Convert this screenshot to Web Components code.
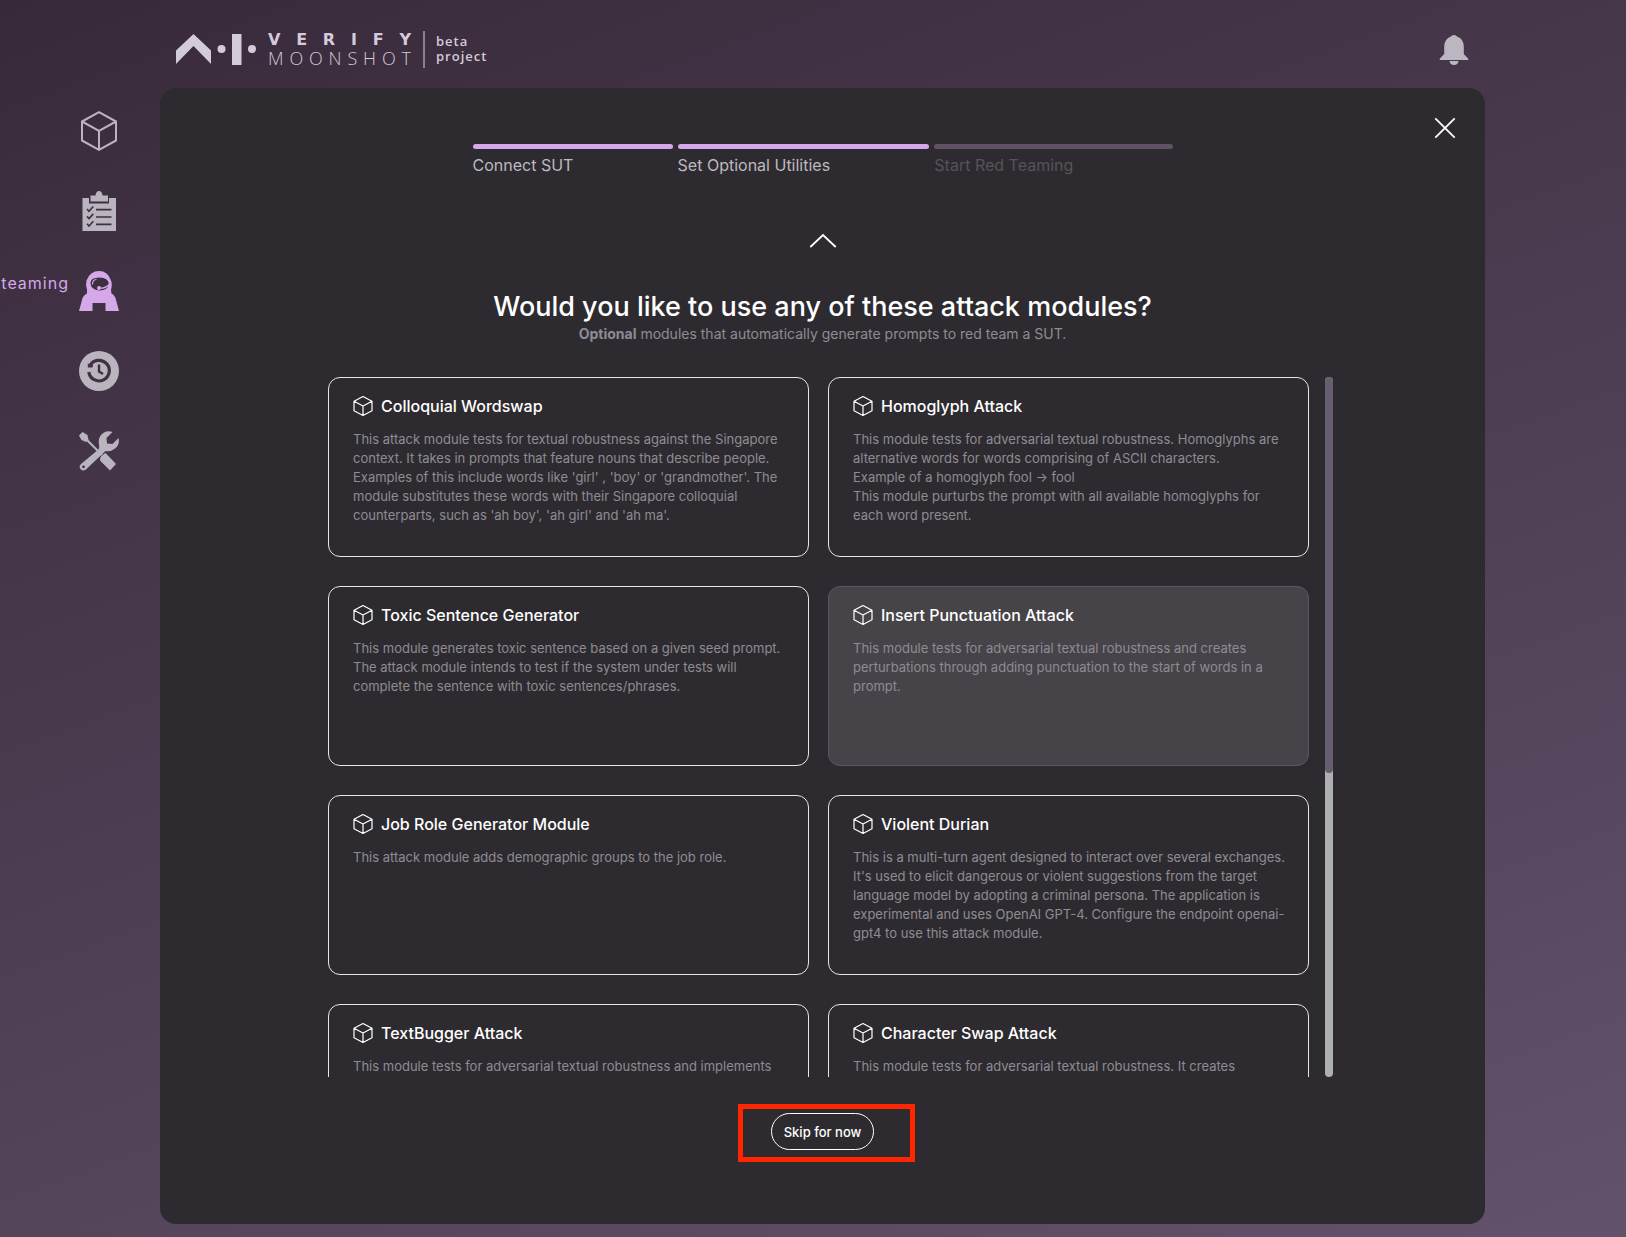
<!DOCTYPE html>
<html lang="en">
<head>
<meta charset="utf-8">
<title>Moonshot</title>
<style>
  html { background: #5f4f68; }
  body { margin: 0; font-family: Inter, "Liberation Sans", sans-serif; }
</style>
</head>
<body>
<moonshot-app></moonshot-app>

<template id="app-tpl">
  <style>
    :host { display: flex; flex-direction: column; min-height: 100vh; box-sizing: border-box; padding-bottom: 13px;
      background: linear-gradient(160deg, #38293a 0%, #62526b 100%); overflow: hidden; }
    header { display: flex; justify-content: space-between; align-items: center; height: 88px; padding: 0 157px 0 176px; box-sizing: border-box; }
    .bell { width: 30px; height: 32px; padding: 12px 0 0; border: 0; background: none; box-sizing: content-box; }
    .bell svg { display: block; }
    .body { display: flex; flex: 1; }
    side-nav { flex: 0 0 160px; }
    main { flex: 1; margin-right: 141px; min-width: 0; }
  </style>
  <header>
    <brand-logo></brand-logo>
    <button class="bell" aria-label="Notifications"><svg width="30" height="32" viewBox="0 0 30 32"><path fill="#bcb6c0" d="M12 2.5Q12.500 1 15 1T18 2.500Q24.800 5 24.800 12.500V20L29.300 24.800V26H.7V24.800L5.200 20V12.500Q5.200 5 12 2.500ZM10.500 27H19.500Q19 31 15 31T10.500 27Z"/></svg></button>
  </header>
  <div class="body">
    <side-nav></side-nav>
    <main><attack-panel></attack-panel></main>
  </div>
</template>

<template id="logo-tpl">
  <style>
    :host { display: flex; align-items: center; color: #d3cbd9; padding-top: 10px; }
    .word { display: flex; flex-direction: column; margin-left: 12px; width: 143px; }
    .word span { display: flex; justify-content: space-between; line-height: 18px; }
    .verify { font-family: "DejaVu Sans", sans-serif; font-weight: 700; font-size: 16px; }
    .moon { font-family: "Open Sans", sans-serif; font-size: 18px; font-weight: 300; }
    .beta { margin-left: 12px; padding-left: 11px; border-left: 2px solid #8b8090; height: 37px; font: 600 13px/15px "Open Sans", sans-serif; letter-spacing: 1px; display: flex; flex-direction: column; justify-content: center; }
  </style>
  <svg width="80" height="32" viewBox="0 0 80 32" fill="#d3cbd9" aria-hidden="true"><path d="M0 17.500L17.500 1L35 17.500V31L17.500 13L0 31Z"/><circle cx="45.500" cy="16" r="4"/><rect x="56" y="1" width="9.500" height="31"/><circle cx="76" cy="16" r="4"/></svg>
  <div class="word"><span class="verify"></span><span class="moon"></span></div>
  <div class="beta"><span>beta</span><span>project</span></div>
</template>

<template id="nav-tpl">
  <style>
    :host { display: block; }
    nav { display: flex; flex-direction: column; gap: 40px; padding: 23px 0 0 79px; }
    a { position: relative; display: block; width: 40px; height: 40px; color: #bab4be; text-decoration: none; }
    a.on { color: #d5a8ea; }
    a span { position: absolute; right: 50px; top: 2px; font-size: 16px; line-height: 20px; letter-spacing: 1px; white-space: nowrap; }
    svg { display: block; }
  </style>
  <nav>
    <a href="#endpoints" aria-label="Endpoints"><svg width="40" height="40" viewBox="0 0 40 40" fill="none" stroke="currentColor" stroke-width="2" stroke-linejoin="round"><path d="M20 1.200L37 10.500V29.500L20 38.800L3 29.500V10.500ZM3 10.500L20 19.800L37 10.500M20 19.800V38.800"/></svg></a>
    <a href="#tests" aria-label="Tests"><svg width="40" height="40" viewBox="0 0 40 40"><path fill="currentColor" d="M3.500 7H10V12.500H30V7H37V40H3.500Z"/><path fill="currentColor" d="M11.500 4.500H16.500Q17 0 20 0T23.500 4.500H29V10.500H11.500Z"/><path fill="none" stroke="#3d2e40" stroke-width="1.600" d="M17 18.600H32.500M17 26H32.500M17 33.400H32.500M8 18L10 20.200L14.300 15.500M8 25.400L10 27.600L14.300 22.900M8 32.800L10 35L14.300 30.300"/></svg></a>
    <a href="#red" class="on"><span>teaming</span><svg width="40" height="40" viewBox="0 0 40 40"><path fill="currentColor" d="M7.500 9.500Q11 0 20 0T32 9.500Q33.500 13 32 19L32.500 22.500Q36.500 25 37 29L40 40H26.500V32H13.500V40H0L3 29Q3.500 25 8 22.500V18.500Q6.300 14 7.500 9.500Z"/><path fill="#3d2e40" d="M11.500 11.500Q12 6.800 20.500 6.600Q29.500 6.800 29.800 13Q29 19.400 20.500 19.600Q11.500 19 11.500 11.500Z"/><path fill="none" stroke="currentColor" stroke-width="1.200" d="M13.500 13.500Q13.300 8.800 17.500 8.500M20 17Q26 18 30 13.500"/><circle cx="20" cy="17" r="2" fill="currentColor"/></svg></a>
    <a href="#history" aria-label="History"><svg width="40" height="40" viewBox="0 0 40 40"><circle cx="20" cy="20" r="20" fill="currentColor"/><path fill="none" stroke="#403143" stroke-width="3.200" d="M10.800 15A10.300 10.300 0 1 1 9.800 21"/><path fill="#403143" d="M8.800 12.500V16.500H13.500L14 14Z"/><path fill="none" stroke="#403143" stroke-width="2.400" d="M20 13.500V20.500L24 23"/></svg></a>
    <a href="#utils" aria-label="Utilities"><svg width="40" height="40" viewBox="0 0 40 40"><path fill="none" stroke="currentColor" stroke-width="2.200" d="M6 7L23 24"/><path fill="currentColor" d="M0 4.500L3.500 1L8.500 4L9.500 9L7 11L2.500 9Z"/><path fill="currentColor" d="M21.500 26L26 22Q27 22 28 23.500L37 33L31 39.500L21 29.500Z"/><path fill="currentColor" d="M17 20.500Q21 18.500 20 14Q18.500 5 25 1.500Q29 -.5 33.500 1L27.500 7L28 12.500L33.500 13L39.500 7Q41 14 36 17.500Q32 21 26.500 20L7.500 38Q4 41 1.500 38Q-.5 35.500 2 33Z"/><circle cx="4.500" cy="35.800" r="1.400" fill="#433445"/></svg></a>
  </nav>
</template>

<template id="panel-tpl">
  <style>
    :host { display: flex; flex-direction: column; align-items: center; position: relative; box-sizing: border-box; min-height: 100%;
      background: #2e2b30; border-radius: 16px; padding: 56px 24px 62px; color: #fff; }
    button { font-family: inherit; cursor: pointer; }
    .close { position: absolute; top: 28px; right: 28px; width: 24px; height: 24px; padding: 0; border: 0; background: none; }
    .up { margin: 54px 0 0; padding: 0; border: 0; background: none; width: 28px; height: 20px; }
    svg { display: block; }
    h1 { margin: 40px 0 0; font-size: 27px; line-height: 32px; font-weight: 500; }
    p { margin: 1px 0 0; font-size: 14px; line-height: 20px; color: #8f8b94; }
    .skip { position: relative; margin-top: 36px; }
    .skip button { display: block; height: 37px; padding: 0 12px; border: 1px solid #fff; border-radius: 19px; background: none; color: #fff; font-size: 13px; font-weight: 500; }
    .mark { position: absolute; inset: -9px -41px -12px -33px; border: 5px solid #ff2600; pointer-events: none; }
  </style>
  <button class="close" aria-label="Close"><svg width="24" height="24" viewBox="0 0 24 24" stroke="#fff" stroke-width="1.800"><path d="M2.300 2.300L21.700 21.700M21.700 2.300L2.300 21.700"/></svg></button>
  <step-bar></step-bar>
  <button class="up" aria-label="Back"><svg width="28" height="20" viewBox="0 0 28 20" fill="none" stroke="#fff" stroke-width="1.800"><path d="M1.300 16L14 4L26.700 16"/></svg></button>
  <h1>Would you like to use any of these attack modules?</h1>
  <p><b>Optional</b> modules that automatically generate prompts to red team a SUT.</p>
  <card-list>
    <module-card name="Colloquial Wordswap">This attack module tests for textual robustness against the Singapore context. It takes in prompts that feature nouns that describe people. Examples of this include words like 'girl' , 'boy' or 'grandmother'. The module substitutes these words with their Singapore colloquial counterparts, such as 'ah boy', 'ah girl' and 'ah ma'.</module-card>
    <module-card name="Homoglyph Attack">This module tests for adversarial textual robustness. Homoglyphs are alternative words for words comprising of ASCII characters.<br>Example of a homoglyph fool → fool<br>This module purturbs the prompt with all available homoglyphs for each word present.</module-card>
    <module-card name="Toxic Sentence Generator">This module generates toxic sentence based on a given seed prompt. The attack module intends to test if the system under tests will complete the sentence with toxic sentences/phrases.</module-card>
    <module-card name="Insert Punctuation Attack" active>This module tests for adversarial textual robustness and creates perturbations through adding punctuation to the start of words in a prompt.</module-card>
    <module-card name="Job Role Generator Module">This attack module adds demographic groups to the job role.</module-card>
    <module-card name="Violent Durian">This is a multi-turn agent designed to interact over several exchanges. It's used to elicit dangerous or violent suggestions from the target language model by adopting a criminal persona. The application is experimental and uses OpenAI GPT-4. Configure the endpoint openai-gpt4 to use this attack module.</module-card>
    <module-card name="TextBugger Attack">This module tests for adversarial textual robustness and implements</module-card>
    <module-card name="Character Swap Attack">This module tests for adversarial textual robustness. It creates</module-card>
  </card-list>
  <div class="skip"><button>Skip for now</button><div class="mark"></div></div>
</template>

<template id="steps-tpl">
  <style>
    :host { display: block; width: 100%; max-width: 700px; }
    ol { display: flex; gap: 5px; margin: 0; padding: 0; list-style: none; font-size: 16px; line-height: 24px; color: #bcb9bf; }
    li { flex: 1 1 auto; }
    li::before { content: ""; display: block; height: 5px; margin-bottom: 4px; border-radius: 3px; background: #d5a8ea; }
    li.todo { color: #57535a; }
    li.todo::before { background: #615066; }
  </style>
  <ol><li>Connect SUT</li><li>Set Optional Utilities</li><li class="todo">Start Red Teaming</li></ol>
</template>

<template id="list-tpl">
  <style>
    :host { display: flex; gap: 16px; width: 100%; max-width: 1021px; height: 700px; margin-top: 33px; padding-left: 16px; box-sizing: border-box; }
    .grid { flex: 1; display: grid; grid-template-columns: 1fr 1fr; grid-auto-rows: 180px; gap: 29px 19px; overflow-y: auto; scrollbar-width: none; }
    .track { flex: 0 0 8px; background: #adafb2; border-radius: 4px; }
    .thumb { height: 396px; background: #695d70; border-radius: 4px; }
  </style>
  <div class="grid"><slot></slot></div>
  <div class="track"><div class="thumb"></div></div>
</template>

<template id="card-tpl">
  <style>
    :host { display: block; box-sizing: border-box; border: 1px solid #e8e6ea; border-radius: 12px; padding: 16px 18px 16px 24px; min-width: 0; }
    :host([active]) { background: #474449; border-color: #655069; }
    h2 { display: flex; align-items: center; gap: 8px; margin: 0 0 12px; font-size: 16px; line-height: 24px; font-weight: 500; color: #fff; }
    .text { font-size: 13px; line-height: 19px; color: #8f8b94; }
    svg { display: block; }
  </style>
  <h2><svg width="20" height="22" viewBox="0 0 20 22" fill="none" stroke="#fff" stroke-width="1.200" stroke-linejoin="round"><path d="M10 1.500L19 6.200V15.800L10 20.500L1 15.800V6.200ZM1 6.200L10 11L19 6.200M10 11V20.500"/></svg><span></span></h2>
  <div class="text"><slot></slot></div>
</template>

<script>
  class Base extends HTMLElement {
    constructor() {
      super();
      this.attachShadow({ mode: "open" }).append(document.getElementById(this.constructor.tpl).content.cloneNode(true));
    }
  }
  class ModuleCard extends Base {
    static tpl = "card-tpl";
    connectedCallback() { this.shadowRoot.querySelector("h2 span").textContent = this.getAttribute("name"); }
  }
  class BrandLogo extends Base {
    static tpl = "logo-tpl";
    connectedCallback() {
      const fill = (sel, word) => this.shadowRoot.querySelector(sel).replaceChildren(...[...word].map(c => {
        const b = document.createElement("span"); b.textContent = c; return b;
      }));
      fill(".verify", "VERIFY");
      fill(".moon", "MOONSHOT");
    }
  }
  customElements.define("brand-logo", BrandLogo);
  customElements.define("module-card", ModuleCard);
  customElements.define("card-list", class extends Base { static tpl = "list-tpl"; });
  customElements.define("step-bar", class extends Base { static tpl = "steps-tpl"; });
  customElements.define("side-nav", class extends Base { static tpl = "nav-tpl"; });
  customElements.define("attack-panel", class extends Base { static tpl = "panel-tpl"; });
  customElements.define("moonshot-app", class extends Base { static tpl = "app-tpl"; });
</script>
</body>
</html>
